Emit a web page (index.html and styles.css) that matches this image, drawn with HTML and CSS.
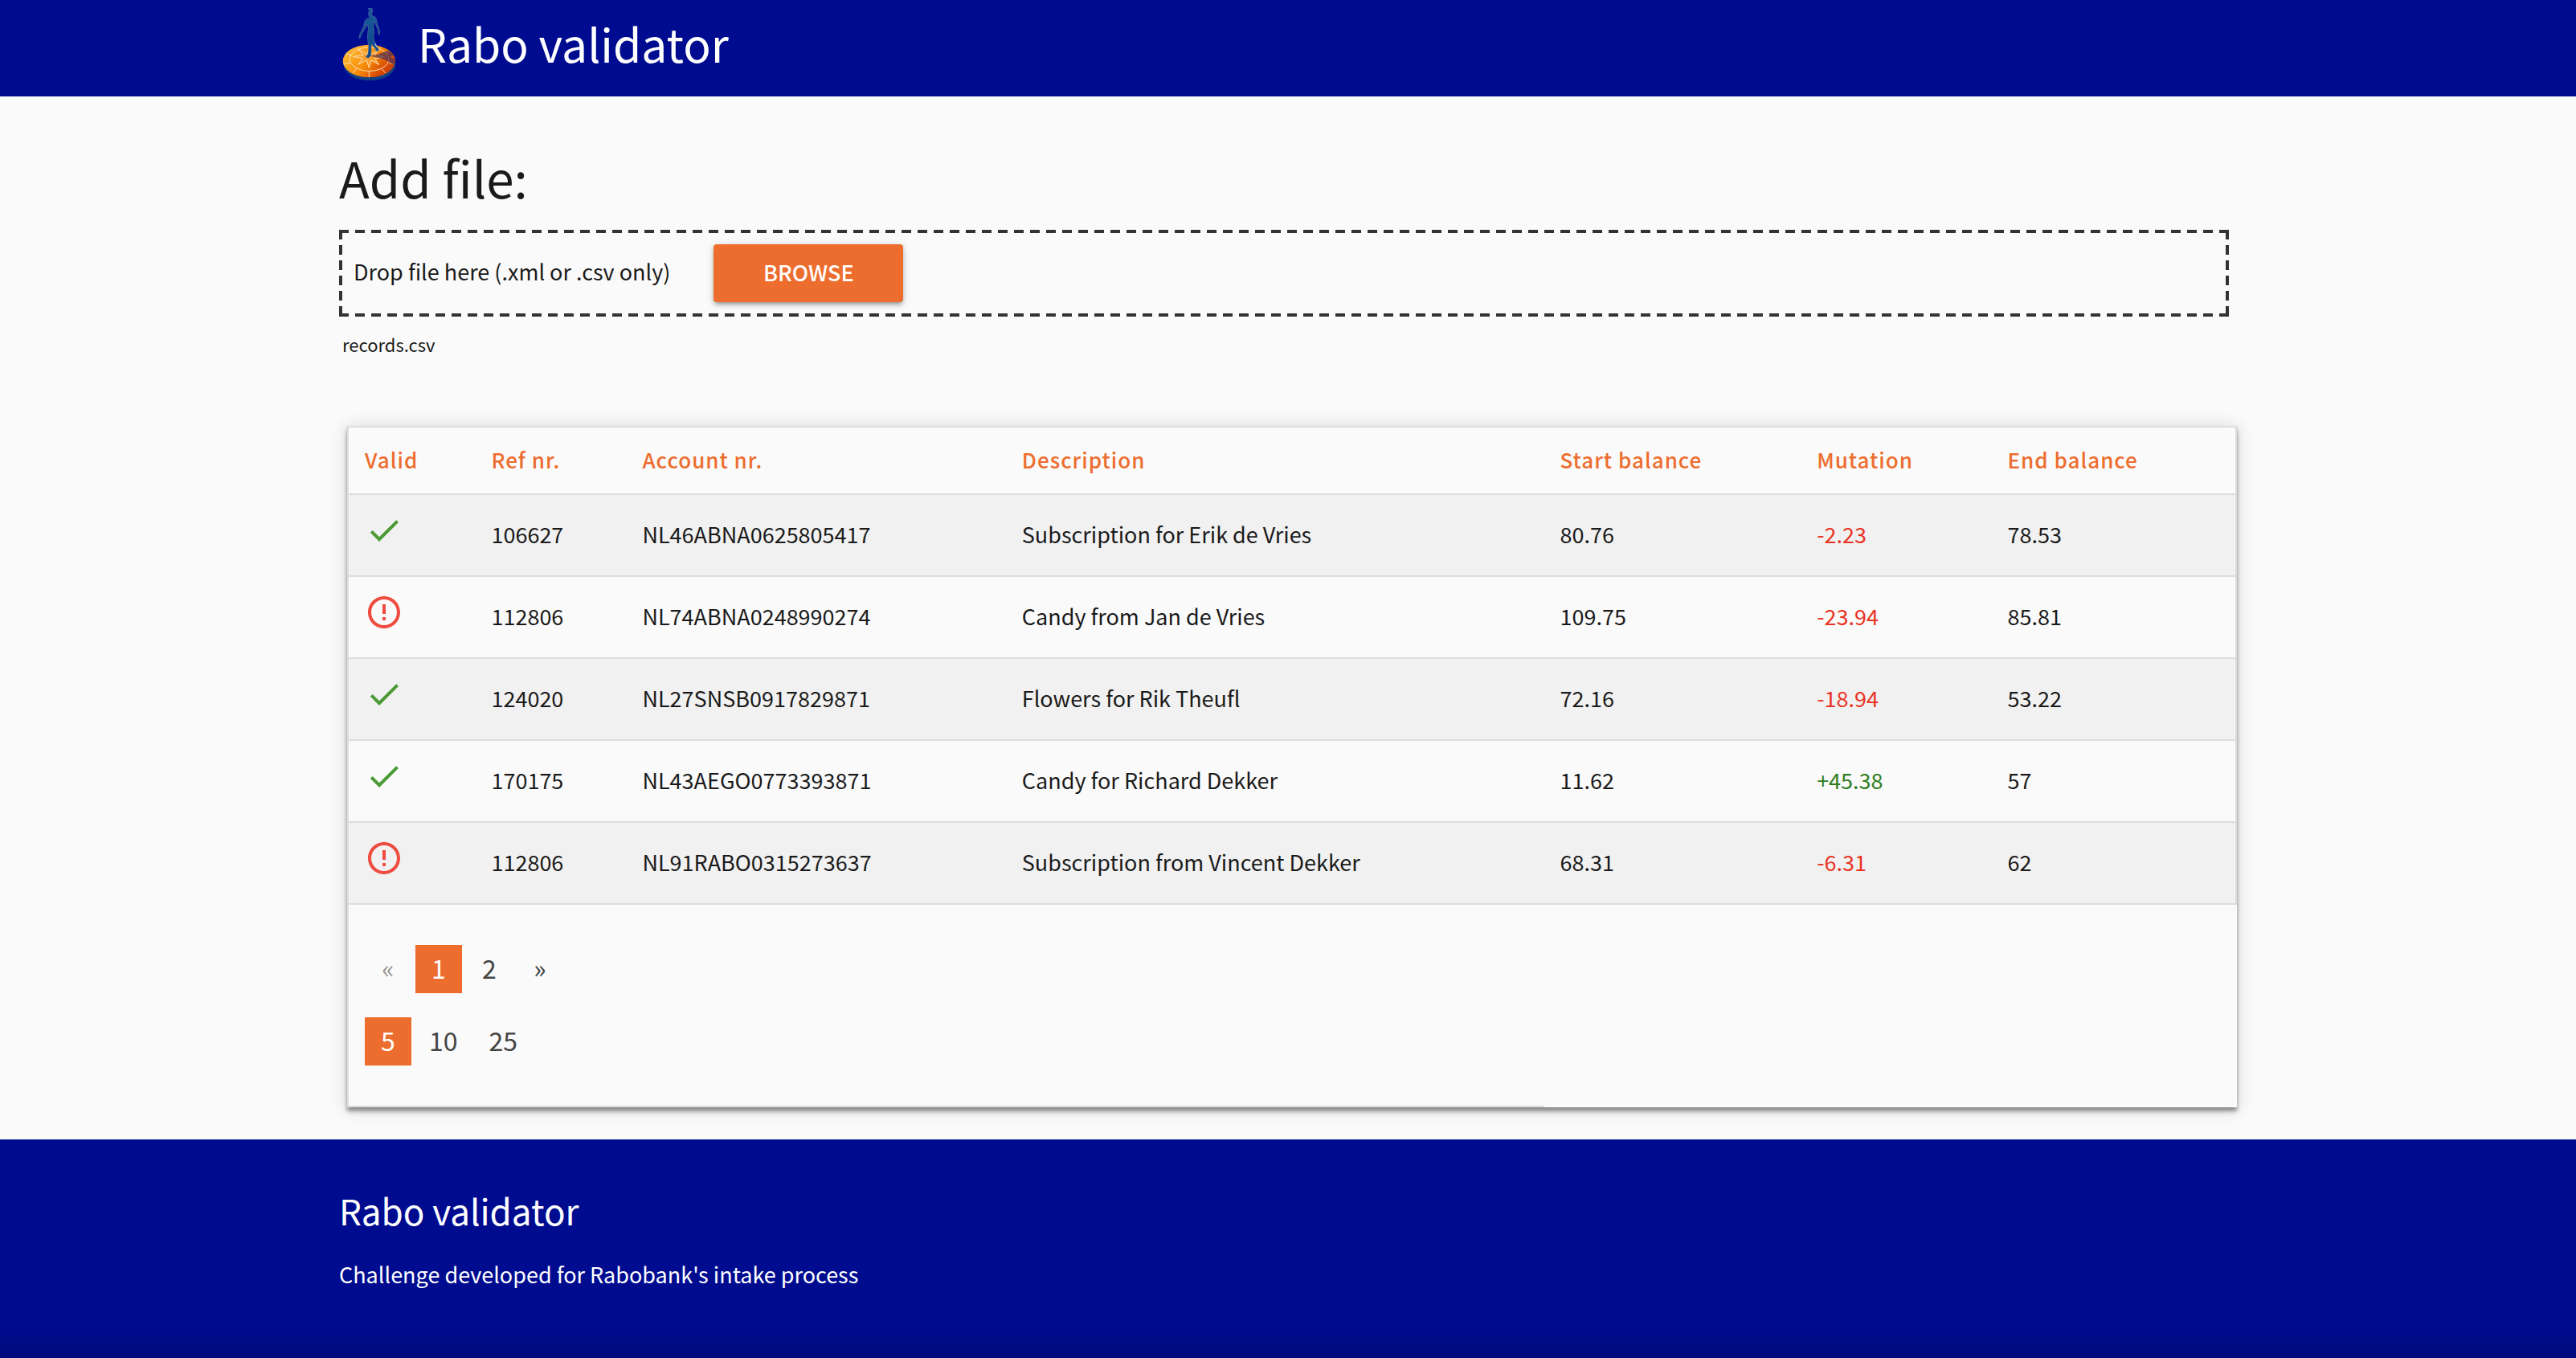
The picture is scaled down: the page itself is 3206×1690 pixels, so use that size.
FILE: index.html
```html
<!DOCTYPE html>
<html lang="en">
<head>
  <meta charset="utf-8">
  <meta name="viewport" content="width=device-width, initial-scale=1">
  <title>Rabo validator</title>
  <link rel="stylesheet" href="styles.css">
</head>
<body>
  <svg class="sprite" aria-hidden="true">
    <symbol id="icon-check" viewBox="0 0 24 24"><path d="M9 16.17L4.83 12l-1.42 1.41L9 19 21 7l-1.41-1.41z"/></symbol>
    <symbol id="icon-error" viewBox="0 0 24 24"><path d="M11 15h2v2h-2zm0-8h2v6h-2zm.99-5C6.47 2 2 6.48 2 12s4.47 10 9.99 10C17.52 22 22 17.52 22 12S17.52 2 11.99 2zM12 20c-4.42 0-8-3.58-8-8s3.58-8 8-8 8 3.58 8 8-3.58 8-8 8z"/></symbol>
  </svg>

  <header class="site-header">
    <div class="container brand">
      <svg class="logo" viewBox="36 30 228 276" role="img" aria-label="Rabo logo">
        <defs>
          <linearGradient id="disc" x1="0" y1="0.2" x2="1" y2="0.8">
            <stop offset="0" stop-color="#ffbd3a"/>
            <stop offset="0.5" stop-color="#f68b08"/>
            <stop offset="0.8" stop-color="#d84a05"/>
            <stop offset="1" stop-color="#b93a10"/>
          </linearGradient>
          <linearGradient id="man" x1="0" y1="0" x2="0" y2="1">
            <stop offset="0" stop-color="#1a5a9c"/>
            <stop offset="1" stop-color="#0c4787"/>
          </linearGradient>
          <clipPath id="disc-clip"><ellipse cx="148" cy="228" rx="97" ry="61"/></clipPath>
        </defs>
        <ellipse cx="150" cy="240" rx="97" ry="61" fill="#0f4084"/>
        <ellipse cx="148" cy="228" rx="98" ry="61" fill="url(#disc)"/>
        <g clip-path="url(#disc-clip)">
          <g fill="none" stroke="#ffe2b0" stroke-width="3">
            <ellipse cx="149" cy="221" rx="73" ry="44"/>
            <path d="M50 241l26-7M88 273l13-17M148 289v-24M209 273l-14-17M245 242l-22-8M60 200l24 7M103 174l6 10M191 175l-7 9M224 190l-16 10"/>
            <path d="M148 254l-9-30-32 17 17-23-37-7 40-5-17-20 30 16 8-23 8 23 28-16-15 20 36 6-35 8 15 21-30-16z" fill="#f89d2c"/>
          </g>
          <path d="M148 209c30-2 52-14 82-23l18 16-20 10 22 12-4 26c-20-24-55-36-98-41z" fill="#57304f" opacity="0.75"/>
        </g>
        <path d="M157 150l9 20 18 16-10-20-5-8z" fill="#fff"/>
        <path d="M145 31h14c3 7 2 14-2 22l1 5c9 3 15 6 17 13l5 24 8 21-1 14-5-5-1-14-10-24-5-10-2 22 3 24-3 15 8 32 13 14-4 7-8-1-1-7-15-18-1 26-1 17-9 8-11-2 9-13 2-30-4-30 2-26 2-10-5-14-6 12-16 26-2 9-6 6 1-13 15-30 5-22c3-7 9-9 17-11v-6c-4-7-4-14 0-22z" fill="url(#man)" stroke="#6f83a0" stroke-width="2" stroke-opacity="0.7"/>
      </svg>
      <span class="brand-title">Rabo validator</span>
    </div>
  </header>

  <main class="container">
    <section class="upload">
      <h1 class="upload-title">Add file:</h1>
      <div class="dropzone">
        <span class="dropzone-text">Drop file here (.xml or .csv only)</span>
        <button class="browse" type="button">BROWSE</button>
      </div>
      <p class="file-name">records.csv</p>
    </section>

    <table class="records">
      <colgroup>
        <col class="col-valid"><col class="col-ref"><col class="col-account"><col class="col-description">
        <col class="col-start"><col class="col-mutation"><col class="col-end">
      </colgroup>
      <thead>
        <tr>
          <th scope="col">Valid</th>
          <th scope="col">Ref nr.</th>
          <th scope="col">Account nr.</th>
          <th scope="col">Description</th>
          <th scope="col">Start balance</th>
          <th scope="col">Mutation</th>
          <th scope="col">End balance</th>
        </tr>
      </thead>
      <tbody>
        <tr>
          <td class="status"><svg class="icon icon-valid" role="img" aria-label="Valid"><use href="#icon-check"/></svg></td>
          <td>106627</td><td>NL46ABNA0625805417</td><td>Subscription for Erik de Vries</td>
          <td>80.76</td><td class="negative">-2.23</td><td>78.53</td>
        </tr>
        <tr>
          <td class="status"><svg class="icon icon-invalid" role="img" aria-label="Invalid"><use href="#icon-error"/></svg></td>
          <td>112806</td><td>NL74ABNA0248990274</td><td>Candy from Jan de Vries</td>
          <td>109.75</td><td class="negative">-23.94</td><td>85.81</td>
        </tr>
        <tr>
          <td class="status"><svg class="icon icon-valid" role="img" aria-label="Valid"><use href="#icon-check"/></svg></td>
          <td>124020</td><td>NL27SNSB0917829871</td><td>Flowers for Rik Theufl</td>
          <td>72.16</td><td class="negative">-18.94</td><td>53.22</td>
        </tr>
        <tr>
          <td class="status"><svg class="icon icon-valid" role="img" aria-label="Valid"><use href="#icon-check"/></svg></td>
          <td>170175</td><td>NL43AEGO0773393871</td><td>Candy for Richard Dekker</td>
          <td>11.62</td><td class="positive">+45.38</td><td>57</td>
        </tr>
        <tr>
          <td class="status"><svg class="icon icon-invalid" role="img" aria-label="Invalid"><use href="#icon-error"/></svg></td>
          <td>112806</td><td>NL91RABO0315273637</td><td>Subscription from Vincent Dekker</td>
          <td>68.31</td><td class="negative">-6.31</td><td>62</td>
        </tr>
      </tbody>
      <tfoot>
        <tr>
          <td class="paging" colspan="4">
            <nav class="pagination" aria-label="Page">
              <a class="page disabled" href="#">«</a>
              <a class="page active" href="#">1</a>
              <a class="page" href="#">2</a>
              <a class="page" href="#">»</a>
            </nav>
            <nav class="pagination" aria-label="Rows per page">
              <a class="page active" href="#">5</a>
              <a class="page" href="#">10</a>
              <a class="page" href="#">25</a>
            </nav>
          </td>
        </tr>
      </tfoot>
    </table>
  </main>

  <footer class="site-footer">
    <div class="container">
      <h2 class="footer-title">Rabo validator</h2>
      <p class="footer-text">Challenge developed for Rabobank's intake process</p>
    </div>
  </footer>
</body>
</html>
```
FILE: styles.css
```css
:root {
  --blue: #000c90;
  --orange: #ed6d2e;
  --line: #ddd;
  --ink: #1a1a1a;
}

* {
  box-sizing: border-box;
}

body {
  margin: 0;
  min-height: 100vh;
  display: flex;
  flex-direction: column;
  background: #fafafa;
  color: var(--ink);
  font-family: "Noto Sans CJK SC", "Noto Sans", sans-serif;
  font-size: 27px;
  line-height: 40px;
}

h1,
h2,
p {
  margin: 0;
  font-weight: 400;
}

.sprite {
  display: none;
}

.container {
  width: 100%;
  max-width: 2362px;
  margin: 0 auto;
}

/* Header */
.site-header {
  background: var(--blue);
  color: #fff;
}

.brand {
  display: flex;
  gap: 22px;
  height: 120px;
}

.logo {
  width: 76px;
  height: 92px;
  margin-top: 10px;
}

.brand-title {
  font-size: 57px;
  line-height: 106px;
}

/* Upload */
.upload {
  padding: 60px 10px 82px 0;
}

.upload-title {
  margin-bottom: 26px;
  font-size: 62px;
  line-height: 80px;
}

/* Long dashes (12px on, 8px off) drawn as one gradient per side */
.dropzone {
  display: flex;
  align-items: center;
  gap: 54px;
  height: 108px;
  padding: 0 18px 4px;
  background:
    linear-gradient(90deg, #333 12px, transparent 12px) 0 0 / 20px 4px repeat-x,
    linear-gradient(90deg, #333 12px, transparent 12px) 0 100% / 20px 4px repeat-x,
    linear-gradient(#333 12px, transparent 12px) 0 0 / 4px 19px repeat-y,
    linear-gradient(#333 12px, transparent 12px) 100% 0 / 4px 19px repeat-y;
}

.browse {
  width: 236px;
  height: 72px;
  margin-top: 4px;
  padding: 0 0 2px;
  border: 0;
  border-radius: 4px;
  background: var(--orange);
  box-shadow: 0 4px 4px rgba(0, 0, 0, 0.14), 0 6px 2px -4px rgba(0, 0, 0, 0.12), 0 2px 10px rgba(0, 0, 0, 0.2);
  color: #fff;
  font: inherit;
  font-weight: 500;
}

.file-name {
  margin-top: 14px;
  padding-left: 4px;
  font-size: 22px;
}

/* Records */
.records {
  width: calc(100% - 10px);
  margin: 0 0 40px 10px;
  table-layout: fixed;
  border-spacing: 0;
  border-left: 2px solid var(--line);
  box-shadow: 0 4px 4px rgba(0, 0, 0, 0.24), 0 6px 6px rgba(0, 0, 0, 0.2), 0 2px 20px rgba(0, 0, 0, 0.16);
}

.col-valid { width: 6.7%; }
.col-ref { width: 8%; }
.col-account { width: 20.1%; }
.col-description { width: 28.5%; }
.col-start { width: 13.6%; }
.col-mutation { width: 10.1%; }
.col-end { width: 13%; }

.records th,
.records td {
  padding: 0 20px 2px;
  border-bottom: 2px solid var(--line);
  text-align: left;
}

.records th {
  height: 86px;
  border-top: 2px solid var(--line);
  color: var(--orange);
  font-size: 26px;
  font-weight: 500;
  letter-spacing: 1px;
}

.records th:last-child,
.records tbody td:last-child {
  border-right: 2px solid var(--line);
}

.records tbody tr:nth-child(odd) {
  background: #f1f1f1;
}

.records .status {
  padding: 20px 20px 32px;
}

.icon {
  display: block;
  width: 48px;
  height: 48px;
}

.icon-valid { fill: #4a9a35; }
.icon-invalid { fill: #ee4c40; }
.records .negative { color: #ea3323; }
.records .positive { color: #2f7d1c; }

/* Pagination */
.records .paging {
  padding: 50px 20px;
}

.pagination {
  display: flex;
  gap: 5px;
}

.pagination + .pagination {
  margin-top: 30px;
}

.page {
  min-width: 58px;
  height: 60px;
  padding: 0 17px;
  color: #444;
  font-size: 32px;
  line-height: 56px;
  text-align: center;
  text-decoration: none;
}

.page.active {
  background: var(--orange);
  color: #fff;
}

.page.disabled {
  color: #999;
}

/* Footer */
.site-footer {
  flex: 1;
  padding: 58px 0 84px;
  background: linear-gradient(to top, #000a7c, var(--blue) 44px);
  color: #fff;
}

.footer-title {
  margin-bottom: 30px;
  font-size: 44px;
  line-height: 60px;
}

.footer-text {
  font-size: 27px;
}
```
